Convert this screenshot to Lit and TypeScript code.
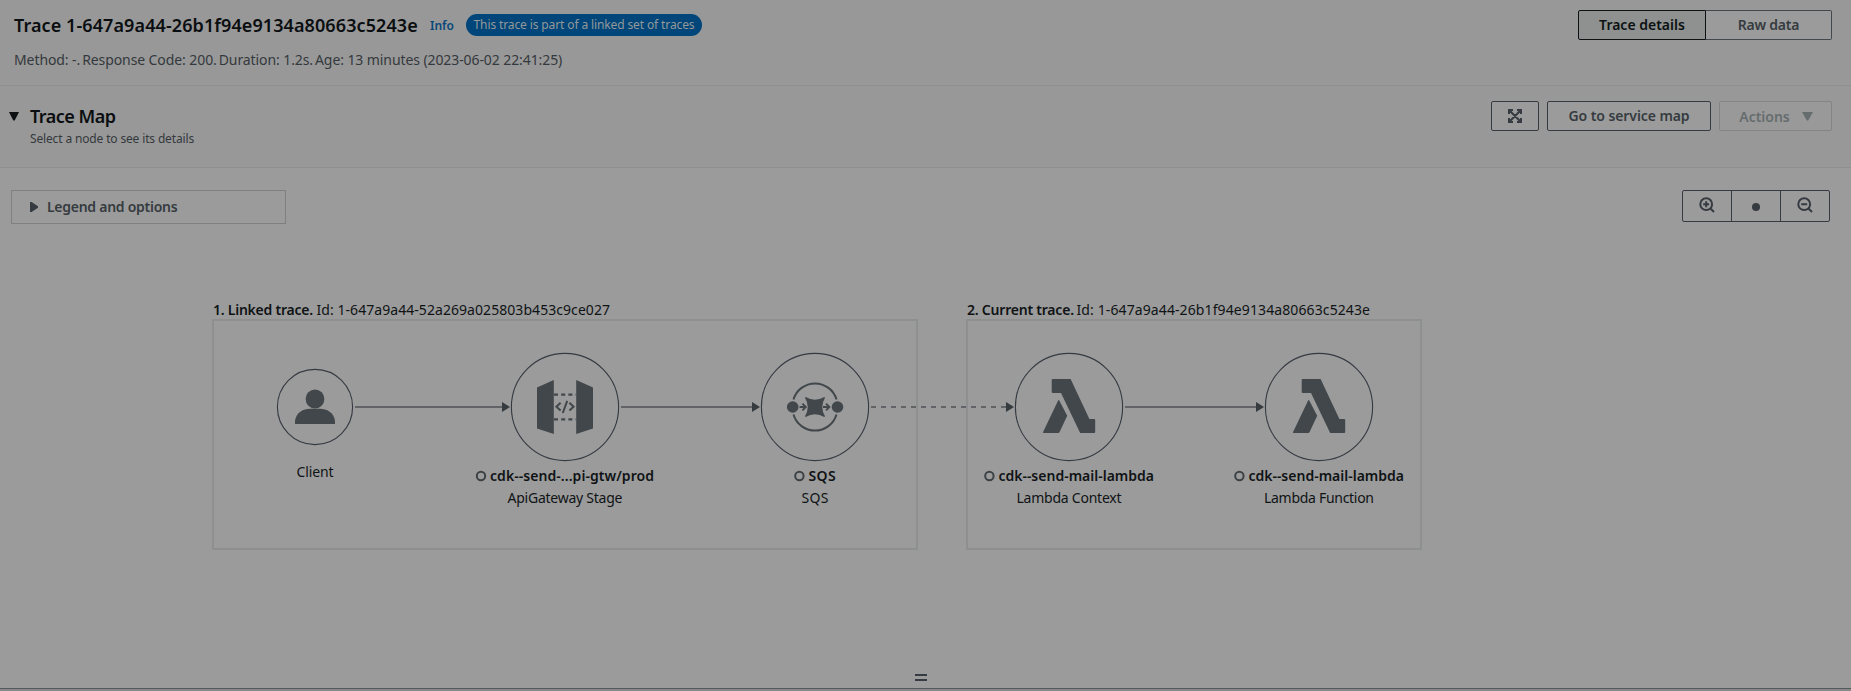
import { LitElement, html, svg, css } from "lit";
import { customElement, property } from "lit/decorators.js";

type Kind = "client" | "gateway" | "sqs" | "lambda";
interface MapNode {
  kind: Kind;
  x: number;
  r: number;
  title?: string;
  titleX?: number;
  titleW?: number;
  sub: string;
  subW: number;
}

const CENTER_Y = 407;

const nodes: MapNode[] = [
  { kind: "client", x: 315, r: 37.6, sub: "Client", subW: 37 },
  { kind: "gateway", x: 565, r: 53.6, title: "cdk--send-...pi-gtw/prod", titleX: 490, titleW: 164, sub: "ApiGateway Stage", subW: 115 },
  { kind: "sqs", x: 815, r: 53.6, title: "SQS", titleX: 808.4, titleW: 27.4, sub: "SQS", subW: 27 },
  { kind: "lambda", x: 1069, r: 53.6, title: "cdk--send-mail-lambda", titleX: 998.4, titleW: 155.6, sub: "Lambda Context", subW: 105 },
  { kind: "lambda", x: 1319, r: 53.6, title: "cdk--send-mail-lambda", titleX: 1248.4, titleW: 155.6, sub: "Lambda Function", subW: 110 },
];

const edges = [
  { from: 355, to: 510, linked: false },
  { from: 621, to: 760, linked: false },
  { from: 871, to: 1014, linked: true },
  { from: 1125, to: 1264, linked: false },
];

const groups = [
  { x: 212, w: 706, label: "1. Linked trace.", labelW: 100, id: "Id: 1-647a9a44-52a269a025803b453c9ce027", idX: 317 },
  { x: 966, w: 456, label: "2. Current trace.", labelW: 107, id: "Id: 1-647a9a44-26b1f94e9134a80663c5243e", idX: 1077 },
];

const glyphs: Record<Kind, unknown> = {
  client: svg`<circle cx="0" cy="-8" r="9.4"></circle>
    <path d="M-20 17V14C-19 5.5-11.5 1.8-5 1.8H5C11.5 1.8 19 5.5 20 14V17Z"></path>`,
  gateway: svg`<path d="M-28-19.6-11.2-27V27L-28 21.4ZM28-19.6 11.2-27V27L28 21.4Z"></path>
    <path class="stroke" stroke-width="2.1" stroke-dasharray="4 3.2" d="M-11-12.4H11M-11 12.4H11"></path>
    <path class="stroke" stroke-width="2" d="M-4.4-4.2-8.6-.3-4.4 3.6M4.4-4.2 8.6-.3 4.4 3.6M2.2-6.2-2.2 6"></path>`,
  sqs: svg`<circle cx="-22.3" cy="0" r="5.8"></circle><circle cx="22.5" cy="0" r="5.8"></circle>
    <path class="stroke" stroke-width="2" d="M-21.5-7.5A22.4 22.4 0 0 1 21.5-7.5M-21.5 7.5A22.4 22.4 0 0 0 21.5 7.5"></path>
    <path d="M-9.3-9.9Q0-4.5 9.3-9.9L10-9.2Q4.5 0 10 9.2L9.3 9.9Q0 4.5-9.3 9.9L-10 9.2Q-4.5 0-10-9.2Z"></path>
    <path d="M-6.6-6H6.6V6H-6.6Z"></path>
    <path class="stroke" stroke-width="1.9" d="M-15.4 0H-9.8M-12.6-3.4-9.2 0-12.6 3.4M8 0H13.8M11-3.4 14.4 0 11 3.4"></path>`,
  lambda: svg`<path d="M-16.3-28H1.6L20.4 12H25.2Q26.2 12 26.2 13V25Q26.2 26 25.2 26H11.2L-8-14H-16.3Q-17.3-14-17.3-15V-27Q-17.3-28-16.3-28Z"></path>
    <path d="M-11-6.2Q-10.3-7.6-9.6-6.2L-1.8 8.8-9.4 25Q-9.9 26-10.8 26H-25.4Q-26.4 26-25.9 25Z"></path>`,
};

@customElement("service-diagram")
class ServiceDiagram extends LitElement {
  static styles = css`
    :host { display: block; flex: 1; min-height: 0; }
    .canvas { display: block; width: 1851px; height: 444px; }
    text { font-family: "Noto Sans", sans-serif; font-size: 14px; fill: #0f1315; }
    .bold { font-weight: 600; }
    .group { fill: none; stroke: #8e8f8f; stroke-width: 2; }
    .edge { stroke: #626366; stroke-width: 2; }
    .linked { stroke-dasharray: 5 5; }
    .head { fill: #353b3f; }
    .ring { fill: none; stroke: #353a42; stroke-width: 1.1; }
    .status { fill: none; stroke: #3c4145; stroke-width: 2; }
    .glyph { fill: #41474a; }
    .stroke { fill: none; stroke: #41474a; }
  `;

  render() {
    return html`<svg class="canvas" viewBox="0 224 1851 444">
      ${groups.map((g) => svg`
        <rect class="group" x=${g.x + 1} y="320" width=${g.w - 2} height="229"></rect>
        <text class="bold" x=${g.x + 1} y="315" textLength=${g.labelW}>${g.label}</text>
        <text x=${g.idX - 0.5} y="315" textLength="293.5">${g.id}</text>`)}
      ${edges.map((e) => svg`
        <line class="edge ${e.linked ? "linked" : ""}" x1=${e.from} x2=${e.to - 8} y1=${CENTER_Y} y2=${CENTER_Y}></line>
        <path class="head" d="M${e.to - 8} ${CENTER_Y - 5}L${e.to} ${CENTER_Y}L${e.to - 8} ${CENTER_Y + 5}Z"></path>`)}
      ${nodes.map((n) => svg`
        <circle class="ring" cx=${n.x} cy=${CENTER_Y} r=${n.r}></circle>
        <g class="glyph" transform="translate(${n.x} ${CENTER_Y})">${glyphs[n.kind]}</g>
        ${n.title
          ? svg`<circle class="status" cx=${n.titleX! - 9} cy="476" r="4.2"></circle>
              <text class="bold" x=${n.titleX!} y="481" textLength=${n.titleW!}>${n.title}</text>`
          : ""}
        <text x=${n.x - n.subW / 2} y=${n.title ? 503 : 477} textLength=${n.subW}>${n.sub}</text>`)}
    </svg>`;
  }
}

@customElement("zoom-icon")
class ZoomIcon extends LitElement {
  @property({ type: Boolean }) plus = false;
  static styles = css`
    :host { display: block; width: 16px; height: 16px; margin-top: -2px; }
    .icon { display: block; fill: none; stroke: #353b40; stroke-width: 2; }
  `;
  render() {
    return html`<svg class="icon" width="16" height="16" viewBox="0 0 16 16">
      <circle cx="7.2" cy="7.2" r="5.9"></circle>
      <path d="M11.2 11.2 15 15M4.2 7.2H10.2"></path>
      ${this.plus ? svg`<path d="M7.2 4.2V10.2"></path>` : ""}
    </svg>`;
  }
}

@customElement("app-root")
class AppRoot extends LitElement {
  static styles = css`
    :host {
      display: flex; flex-direction: column; box-sizing: border-box;
      width: 100%; height: 691px; overflow: hidden; background: #989898;
      font: 14px/20px "Noto Sans", sans-serif; color: #353b40;
    }
    * { box-sizing: border-box; }
    .header { display: flex; justify-content: space-between; height: 86px; padding: 10px 19px 0 14px; border-bottom: 1px solid #8e8f8f; }
    .heading { display: flex; align-items: center; height: 30px; white-space: nowrap; }
    .title { font-size: 18px; line-height: 30px; font-weight: 600; letter-spacing: 0.09px; color: #0b0e10; margin: 0; width: 416px; }
    .info { font-size: 12px; line-height: 22px; font-weight: 600; color: #064879; width: 36px; padding-top: 1px; }
    .badge { height: 22px; width: 236px; border-radius: 11px; background: #00467a; color: #949899; font-size: 12px; line-height: 22px; letter-spacing: -0.12px; text-align: center; }
    .meta { display: flex; gap: 2px; margin-top: 10px; letter-spacing: -0.09px; color: #34393d; white-space: nowrap; }
    .btn { display: flex; align-items: center; justify-content: center; height: 30px; border: 1px solid #353b40; border-radius: 2px; background: #9b9b9b; color: #353b40; font-weight: 600; white-space: nowrap; }
    .segments { display: flex; }
    .details { width: 128px; border-color: #0d1113; background: #8e918f; color: #0d1113; border-radius: 2px 0 0 2px; }
    .raw { width: 126px; border-left: 0; border-color: #43484c; border-radius: 0 2px 2px 0; letter-spacing: -0.2px; }
    .panel { display: flex; justify-content: space-between; height: 82px; padding: 15px 19px 0 9px; border-bottom: 1px solid #8e8f8f; }
    .panel-title { display: flex; gap: 11px; }
    .caret { margin-top: 11px; height: 10px; }
    .panel h2 { margin: 0; font-size: 18px; line-height: 30px; font-weight: 600; letter-spacing: -0.5px; color: #0b0e10; }
    .sub { margin-top: -1px; font-size: 12px; line-height: 18px; letter-spacing: -0.15px; color: #34393d; }
    .actions { display: flex; gap: 8px; }
    .expand { width: 48px; }
    .go { width: 164px; letter-spacing: -0.08px; }
    .menu { width: 113px; gap: 12px; padding: 1px 0 0 1px; border-color: #838585; color: #666d6e; background: #999; }
    .map { display: flex; flex-direction: column; height: 520px; background: #9b9b9b; }
    .toolbar { display: flex; justify-content: space-between; height: 56px; padding: 22px 21px 0 11px; }
    .legend { display: flex; align-items: center; gap: 9px; width: 275px; height: 34px; padding-left: 18px; border: 1px solid #7e8081; font-weight: 600; letter-spacing: -0.27px; }
    .zoom { display: flex; width: 148px; height: 32px; border: 1px solid #353b40; border-radius: 2px; }
    .cell { display: flex; flex: none; align-items: center; justify-content: center; width: 49px; }
    .cell:first-child { width: 48px; }
    .cell + .cell { border-left: 1px solid #353b40; }
    .dot { width: 8px; height: 8px; border-radius: 50%; background: #353b40; margin-top: 2px; }
    .handle { flex: none; align-self: flex-start; width: 12px; height: 7px; margin: 6px 0 7px 915px; border: solid #353b40; border-width: 2px 0; }
    .divider { height: 3px; border-top: 1px solid #55595c; background: #85898a; }
  `;

  render() {
    return html`
      <header class="header">
        <div>
          <div class="heading">
            <h1 class="title">Trace 1-647a9a44-26b1f94e9134a80663c5243e</h1>
            <span class="info">Info</span>
            <span class="badge">This trace is part of a linked set of traces</span>
          </div>
          <div class="meta">
            <span>Method: -.</span><span>Response Code: 200.</span><span>Duration: 1.2s.</span><span>Age: 13 minutes (2023-06-02 22:41:25)</span>
          </div>
        </div>
        <div class="segments">
          <div class="btn details">Trace details</div>
          <div class="btn raw">Raw data</div>
        </div>
      </header>
      <section class="panel">
        <div class="panel-title">
          <svg class="caret" width="10" height="10"><path d="M0 0H10L5.7 8.5H4.3Z" fill="#0d1113"></path></svg>
          <div>
            <h2>Trace Map</h2>
            <div class="sub">Select a node to see its details</div>
          </div>
        </div>
        <div class="actions">
          <div class="btn expand">
            <svg width="14" height="14" viewBox="0 0 14 14">
              <path d="M1 5V1H5M9 1H13V5M13 9V13H9M5 13H1V9M1.5 1.5 12.5 12.5M12.5 1.5 1.5 12.5" fill="none" stroke="#353b40" stroke-width="2"></path>
            </svg>
          </div>
          <div class="btn go">Go to service map</div>
          <div class="btn menu">Actions
            <svg width="11" height="9"><path d="M0 0H11L6.2 8.5H4.8Z" fill="#666d6e"></path></svg>
          </div>
        </div>
      </section>
      <main class="map">
        <div class="toolbar">
          <div class="legend">
            <svg width="8" height="10"><path d="M0 0H1.6L8 4.3V5.7L1.6 10H0Z" fill="#353b40"></path></svg>Legend and options
          </div>
          <div class="zoom">
            <div class="cell"><zoom-icon plus></zoom-icon></div>
            <div class="cell"><div class="dot"></div></div>
            <div class="cell"><zoom-icon></zoom-icon></div>
          </div>
        </div>
        <service-diagram></service-diagram>
        <div class="handle"></div>
      </main>
      <div class="divider"></div>
    `;
  }
}
